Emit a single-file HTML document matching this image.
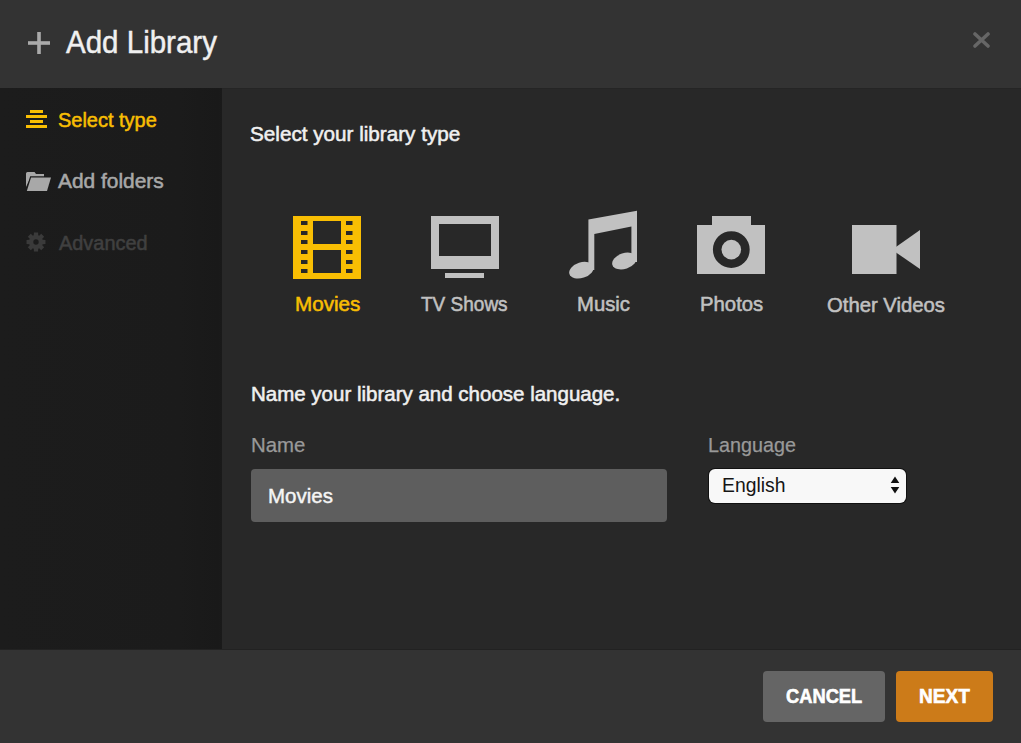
<!DOCTYPE html>
<html><head><meta charset="utf-8">
<style>
html,body{margin:0;padding:0;width:1021px;height:743px;overflow:hidden;background:#282828;}
*{box-sizing:border-box;}
body{font-family:"Liberation Sans",sans-serif;position:relative;}
.abs{position:absolute;}
.t{position:absolute;white-space:nowrap;line-height:1;font-family:"Liberation Sans",sans-serif;transform-origin:0 0;}
#hdr{position:absolute;left:0;top:0;width:1021px;height:88px;background:#333333;}
#side{position:absolute;left:0;top:88px;width:222px;height:561px;background:linear-gradient(to right,#1c1c1c 0,#1b1b1b 180px,#191919 218px,#1a1a1a 222px);}
#main{position:absolute;left:222px;top:88px;width:799px;height:561px;background:#282828;}
#ftr{position:absolute;left:0;top:650px;width:1021px;height:93px;background:#333333;}
#ftrline{position:absolute;left:0;top:649px;width:1021px;height:1px;background:#222222;}
</style></head>
<body>
<div id="hdr"></div>
<div id="side"></div>
<div id="main"></div>
<div id="ftrline"></div>
<div class="abs" style="left:222px;top:88px;width:799px;height:1px;background:#252525;"></div>
<div id="ftr"></div>

<!-- header icons -->
<svg class="abs" style="left:28px;top:32px" width="22" height="22" viewBox="0 0 22 22"><rect x="9.2" y="0" width="3.6" height="22" fill="#aaaaaa"/><rect x="0" y="9.2" width="22" height="3.6" fill="#aaaaaa"/></svg>
<svg class="abs" style="left:973px;top:32px" width="17" height="16" viewBox="0 0 17 16"><path d="M2 2 L15 14 M15 2 L2 14" stroke="#666" stroke-width="3.6" stroke-linecap="round"/></svg>

<!-- sidebar icons -->
<svg class="abs" style="left:26px;top:109px" width="21" height="19" viewBox="0 0 21 19"><rect x="4" y="1" width="13" height="3" fill="#f9be03"/><rect x="0" y="6" width="21" height="3" fill="#f9be03"/><rect x="4" y="11" width="13" height="3" fill="#f9be03"/><rect x="0" y="16" width="21" height="3" fill="#f9be03"/></svg>
<svg class="abs" style="left:26px;top:171px" width="26" height="21" viewBox="0 0 26 21"><path d="M0 2.5 Q0 1 1.5 1 L8.5 1 L10 3 L18 3 L18 6.5 L4.5 6.5 L0 16 Z" fill="#a8a8a8"/><path d="M4.2 5.3 L26.8 5.3 L21.6 21.3 L-0.8 21.3 Z" fill="#1b1b1b"/><path d="M5 6.6 L25 6.6 L21 20 L0.8 20 Z" fill="#a8a8a8"/></svg>
<svg class="abs" style="left:26px;top:232px" width="20" height="20" viewBox="0 0 20 20"><path fill="#3a3a3a" fill-rule="evenodd" d="M7.80 3.36 L7.88 0.53 L12.12 0.53 L12.20 3.36 L13.14 3.74 L15.20 1.81 L18.19 4.80 L16.26 6.86 L16.64 7.80 L19.47 7.88 L19.47 12.12 L16.64 12.20 L16.26 13.14 L18.19 15.20 L15.20 18.19 L13.14 16.26 L12.20 16.64 L12.12 19.47 L7.88 19.47 L7.80 16.64 L6.86 16.26 L4.80 18.19 L1.81 15.20 L3.74 13.14 L3.36 12.20 L0.53 12.12 L0.53 7.88 L3.36 7.80 L3.74 6.86 L1.81 4.80 L4.80 1.81 L6.86 3.74Z M10 7.3A2.7 2.7 0 1 0 10 12.7A2.7 2.7 0 1 0 10 7.3Z"/></svg>

<!-- library type icons -->
<svg class="abs" style="left:293px;top:216px" width="68" height="63" viewBox="0 0 68 63">
<path fill="#f9be03" fill-rule="evenodd" d="M0 0H68V63H0Z M20 5V28H48V5Z M20 34V57H48V34Z M8 5v4h6.5v-4Z M8 15v4h6.5v-4Z M8 24v4h6.5v-4Z M8 34v4h6.5v-4Z M8 44v4h6.5v-4Z M8 53v4h6.5v-4Z M53 5v4h6.5v-4Z M53 15v4h6.5v-4Z M53 24v4h6.5v-4Z M53 34v4h6.5v-4Z M53 44v4h6.5v-4Z M53 53v4h6.5v-4Z"/>
</svg>
<svg class="abs" style="left:431px;top:216px" width="68" height="63" viewBox="0 0 68 63">
<path fill="#c1c1c1" fill-rule="evenodd" d="M0 0H68V53H0Z M8 8V40H60V8Z"/><rect x="14" y="57" width="39" height="5" fill="#c1c1c1"/>
</svg>
<svg class="abs" style="left:566px;top:208px" width="74" height="74" viewBox="0 0 74 74">
<path fill="#c1c1c1" d="M22.4 11.6 L71 2.7 L71 54 L65.4 54 L65.4 18.6 L28.3 26.1 L28.3 62 L22.4 62 Z"/>
<ellipse cx="15.4" cy="62.2" rx="12.6" ry="7.8" transform="rotate(-18 15.4 62.2)" fill="#c1c1c1"/>
<ellipse cx="58.4" cy="53" rx="12.6" ry="7.8" transform="rotate(-18 58.4 53)" fill="#c1c1c1"/>
</svg>
<svg class="abs" style="left:697px;top:216px" width="69" height="58" viewBox="0 0 69 58">
<path fill="#c1c1c1" fill-rule="evenodd" d="M15 0H54V9H68V58H0V9H15Z M34.3 15.2A18.4 18.4 0 1 0 34.3 52A18.4 18.4 0 1 0 34.3 15.2Z"/>
<circle cx="34.3" cy="33.6" r="9.8" fill="#c1c1c1"/>
</svg>
<svg class="abs" style="left:851px;top:224px" width="70" height="51" viewBox="0 0 70 51">
<rect x="1" y="1" width="44.5" height="49" fill="#c1c1c1"/><path d="M41 25.7 L69 6 L69 45 Z" fill="#c1c1c1"/>
</svg>

<!-- form -->
<div class="abs" style="left:251px;top:469px;width:416px;height:53px;background:#5e5e5e;border-radius:4px;"></div>
<div class="abs" style="left:708px;top:468px;width:199px;height:36px;background:#111;border-radius:7px;"></div>
<div class="abs" style="left:709px;top:469px;width:197px;height:34px;background:#f8f8f8;border-radius:6px;"></div>
<svg class="abs" style="left:890px;top:476px" width="10" height="18" viewBox="0 0 10 18"><path d="M5 0.5L9.3 7H0.7Z M0.7 11H9.3L5 17.5Z" fill="#111"/></svg>

<!-- footer buttons -->
<div class="abs" style="left:763px;top:671px;width:122px;height:51px;background:#656565;border-radius:4px;"></div>
<div class="abs" style="left:896px;top:671px;width:97px;height:51px;background:#cc7b19;border-radius:4px;"></div>

<div class="t" style="left:66.00px;top:27.10px;font-size:30.5px;font-weight:400;color:#f0f0f0;-webkit-text-stroke:0.45px #f0f0f0;transform:scaleX(0.9679);">Add Library</div>
<div class="t" style="left:57.95px;top:109.10px;font-size:21px;font-weight:400;color:#f9be03;-webkit-text-stroke:0.55px #f9be03;transform:scaleX(0.9505);">Select type</div>
<div class="t" style="left:58.10px;top:170.30px;font-size:21px;font-weight:400;color:#a8a8a8;-webkit-text-stroke:0.55px #a8a8a8;transform:scaleX(0.9953);">Add folders</div>
<div class="t" style="left:58.50px;top:232.10px;font-size:21px;font-weight:400;color:#404040;-webkit-text-stroke:0.55px #404040;transform:scaleX(0.9484);">Advanced</div>
<div class="t" style="left:250.12px;top:122.90px;font-size:21px;font-weight:400;color:#f0f0f0;-webkit-text-stroke:0.55px #f0f0f0;transform:scaleX(0.9844);">Select your library type</div>
<div class="t" style="left:294.52px;top:293.40px;font-size:21px;font-weight:400;color:#f9be03;-webkit-text-stroke:0.55px #f9be03;transform:scaleX(0.9831);">Movies</div>
<div class="t" style="left:421.10px;top:293.30px;font-size:21px;font-weight:400;color:#c1c1c1;-webkit-text-stroke:0.55px #c1c1c1;transform:scaleX(0.9052);">TV Shows</div>
<div class="t" style="left:576.54px;top:293.40px;font-size:21px;font-weight:400;color:#c1c1c1;-webkit-text-stroke:0.55px #c1c1c1;transform:scaleX(0.9648);">Music</div>
<div class="t" style="left:700.03px;top:293.10px;font-size:21px;font-weight:400;color:#c1c1c1;-webkit-text-stroke:0.55px #c1c1c1;transform:scaleX(0.9672);">Photos</div>
<div class="t" style="left:827.00px;top:293.70px;font-size:21px;font-weight:400;color:#c1c1c1;-webkit-text-stroke:0.55px #c1c1c1;transform:scaleX(0.9656);">Other Videos</div>
<div class="t" style="left:251.32px;top:382.90px;font-size:21px;font-weight:400;color:#f0f0f0;-webkit-text-stroke:0.55px #f0f0f0;transform:scaleX(0.9761);">Name your library and choose language.</div>
<div class="t" style="left:251.01px;top:435.00px;font-size:20.5px;font-weight:400;color:#999999;-webkit-text-stroke:0.25px #999999;transform:scaleX(0.9943);">Name</div>
<div class="t" style="left:708.44px;top:435.30px;font-size:20.5px;font-weight:400;color:#999999;-webkit-text-stroke:0.25px #999999;transform:scaleX(0.9633);">Language</div>
<div class="t" style="left:267.72px;top:485.30px;font-size:21px;font-weight:400;color:#f5f5f5;-webkit-text-stroke:0.45px #f5f5f5;transform:scaleX(0.9754);">Movies</div>
<div class="t" style="left:721.53px;top:474.70px;font-size:20px;font-weight:400;color:#151515;-webkit-text-stroke:0px #151515;transform:scaleX(0.9672);">English</div>
<div class="t" style="left:786.10px;top:686.10px;font-size:20px;font-weight:700;color:#ffffff;-webkit-text-stroke:0.6px #ffffff;transform:scaleX(0.9145);">CANCEL</div>
<div class="t" style="left:919.05px;top:686.10px;font-size:20px;font-weight:700;color:#ffffff;-webkit-text-stroke:0.6px #ffffff;transform:scaleX(0.9547);">NEXT</div>
</body></html>
